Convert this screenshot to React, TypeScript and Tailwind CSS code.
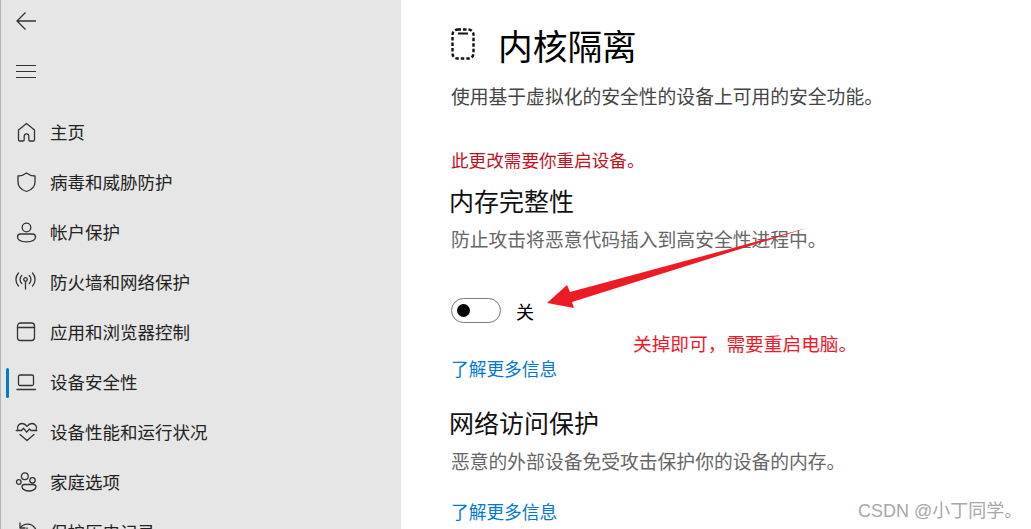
import React from "react";

const font = { fontFamily: '"Noto Sans CJK SC", "Liberation Sans", sans-serif' };

const s = { fill: "none", stroke: "#333", strokeWidth: 1.3, strokeLinecap: "round" as const, strokeLinejoin: "round" as const };

const icons: Record<string, React.ReactNode> = {
  home: <path {...s} d="M9.500 1.500 1.500 8v9.700c0 .8.600 1.300 1.300 1.300h3.200c.7 0 1.200-.5 1.200-1.200v-3.600c0-1.300 1-2.300 2.300-2.300s2.300 1 2.300 2.300v3.600c0 .7.500 1.200 1.200 1.200h3.200c.7 0 1.300-.5 1.300-1.300V8Z" />,
  shield: <path {...s} d="M9.500 1C7 3 4.500 4 1 4v6c0 4.500 3.500 8 8.500 9.500C14.500 18 18 14.500 18 10V4c-3.500 0-6-1-8.500-3Z" />,
  user: <><circle {...s} cx="9.500" cy="5.500" r="4.300" /><path {...s} d="M3.500 12h12c1.700 0 3 1.300 3 3 0 3-3.500 4.800-9 4.800S.5 18 .5 15c0-1.700 1.300-3 3-3Z" /></>,
  wifi: <><circle {...s} cx="8.500" cy="7.500" r="1.800" /><path {...s} d="M8.500 9.500V17M4.800 11.500a5.500 5.500 0 0 1 0-8M12.200 3.500a5.500 5.500 0 0 1 0 8M1.500 14a9.500 9.500 0 0 1 0-13M15.500 1a9.500 9.500 0 0 1 0 13" /></>,
  app: <><rect {...s} x="0.500" y="1" width="17" height="17.500" rx="3" /><path {...s} d="M.5 5.500h17" /></>,
  laptop: <><rect {...s} x="1.500" y="3" width="15" height="10.500" rx="1.500" /><path {...s} d="M0 17.500h18.500" /></>,
  heart: <><path {...s} d="M.8 7.500C-.5 4.500 2 1.500 5 1.500c2 0 3.700 1 5 2.800 1.300-1.800 3-2.800 5-2.800 3 0 5.500 3 4.200 6" /><path {...s} d="M-.8 8.500H4.500l2-2.300 3.200 4 2.700-3.200 1.600 1.500h5.800M3 12.500l7 6 7-6" /></>,
  family: <><circle {...s} cx="7.800" cy="4.300" r="3.400" /><circle {...s} cx="15.500" cy="8.300" r="2.700" /><circle {...s} cx="1.800" cy="10" r="2.300" /><path {...s} d="M7.500 12.500h8c1.900 0 3.500.8 3.500 2.300 0 2.600-3.800 4.200-7 4.200-3.300 0-7-1.600-7-4.200 0-1.300 1.300-2.300 2.500-2.300Z" /></>,
  history: <><path {...s} d="M3.500 5.500A9 9 0 1 1 1.500 11" /><path {...s} d="M3 1v5h5M10 6v5.500l3.500 2" /></>,
};

const items = [
  ["home", "主页"],
  ["shield", "病毒和威胁防护"],
  ["user", "帐户保护"],
  ["wifi", "防火墙和网络保护"],
  ["app", "应用和浏览器控制"],
  ["laptop", "设备安全性"],
  ["heart", "设备性能和运行状况"],
  ["family", "家庭选项"],
  ["history", "保护历史记录"],
];

function Sidebar() {
  return (
    <aside className="w-[401px] h-full shrink-0 bg-[#e6e6e6] border-l-[1px] border-[#b4b4b4] flex flex-col overflow-hidden">
      <div className="h-[100px] shrink-0 pl-[15px] pt-[11px] flex flex-col">
        <svg width="22" height="20" viewBox="0 0 22 20">
          <path d="M20 10H1.500M9.500 1.500 1 10l8.500 8.500" fill="none" stroke="#333" strokeWidth="1.300" />
        </svg>
        <div className="mt-[34px] w-[20px] flex flex-col gap-[5px]">
          <div className="h-px bg-[#333]" />
          <div className="h-px bg-[#333]" />
          <div className="h-px bg-[#333]" />
        </div>
      </div>
      <nav className="flex flex-col shrink-0 pt-[7px]">
        {items.map(([icon, label]) => (
          <div key={label} className="relative h-[50px] shrink-0 flex items-center pl-[16px]">
            {icon === "laptop" && <div className="absolute left-[5px] top-[11px] w-[3px] h-[30px] rounded-full bg-[#0078d4]" />}
            <svg width="20" height="21" viewBox="0 0 20 21" className="shrink-0 overflow-visible">{icons[icon]}</svg>
            <span className="ml-[13px] text-[17.500px] leading-[26px] text-[#222] whitespace-nowrap">{label}</span>
          </div>
        ))}
      </nav>
    </aside>
  );
}

function Main() {
  return (
    <main className="flex-1 h-full bg-white pl-[50px] overflow-hidden relative flex flex-col">
      <div className="flex items-center pt-[21px] h-[68px] shrink-0">
        <svg width="24" height="32" viewBox="0 0 24 32" className="shrink-0 -mt-[1px]">
          <rect x="1.500" y="1.500" width="21" height="29" rx="5" fill="none" stroke="#111" strokeWidth="2.400" strokeDasharray="3.500 2" />
          <path d="M7 5.500h10" stroke="#111" strokeWidth="2" />
        </svg>
        <h1 className="ml-[23px] text-[34.700px] leading-[48px] font-normal text-black whitespace-nowrap">内核隔离</h1>
      </div>
      <p className="mt-[14px] text-[18.800px] leading-[28px] text-[#444] whitespace-nowrap">使用基于虚拟化的安全性的设备上可用的安全功能。</p>
      <p className="mt-[37px] text-[17.600px] leading-[26px] text-[#c50f1f] whitespace-nowrap">此更改需要你重启设备。</p>
      <h2 className="mt-[9px] -ml-[2px] text-[25px] leading-[36px] font-normal text-[#111] whitespace-nowrap">内存完整性</h2>
      <p className="mt-[7px] text-[18.800px] leading-[28px] text-[#666] whitespace-nowrap">防止攻击将恶意代码插入到高安全性进程中。</p>
      <div className="mt-[45px] flex items-center h-[24px]">
        <div className="w-[50px] h-[25px] rounded-full border border-[#777] bg-white flex items-center pl-[5px] shrink-0">
          <div className="w-[13px] h-[13px] rounded-full bg-black" />
        </div>
        <span className="ml-[15px] mt-[2px] text-[18px] leading-[26px] text-black">关</span>
      </div>
      <a className="mt-[33px] text-[17.700px] leading-[26px] text-[#0078d4] whitespace-nowrap">了解更多信息</a>
      <h2 className="mt-[23px] -ml-[2px] text-[25px] leading-[36px] font-normal text-[#111] whitespace-nowrap">网络访问保护</h2>
      <p className="mt-[7px] text-[18.800px] leading-[28px] text-[#666] whitespace-nowrap">恶意的外部设备免受攻击保护你的设备的内存。</p>
      <a className="mt-[23px] text-[17.700px] leading-[26px] text-[#0078d4] whitespace-nowrap">了解更多信息</a>
    </main>
  );
}

export default function App() {
  return (
    <div className="relative w-[1031px] h-[529px] overflow-hidden flex bg-white" style={font}>
      <Sidebar />
      <Main />
      <svg width="1031" height="529" viewBox="0 0 1031 529" className="absolute left-0 top-0 pointer-events-none">
        <path d="M807 228 570 292 567 285 547 303 574 308 572 302Z" fill="#ed1c24" />
      </svg>
      <span className="absolute left-[633px] top-[330px] text-[18.700px] leading-[26px] text-[#f0192a] whitespace-nowrap">关掉即可，需要重启电脑。</span>
      <span className="absolute left-[858px] top-[498px] text-[18px] leading-[26px] text-[#a8a8a8] whitespace-nowrap" style={{ fontFamily: '"Liberation Sans", "Noto Sans CJK SC", sans-serif' }}>CSDN @小丁同学。</span>
    </div>
  );
}
